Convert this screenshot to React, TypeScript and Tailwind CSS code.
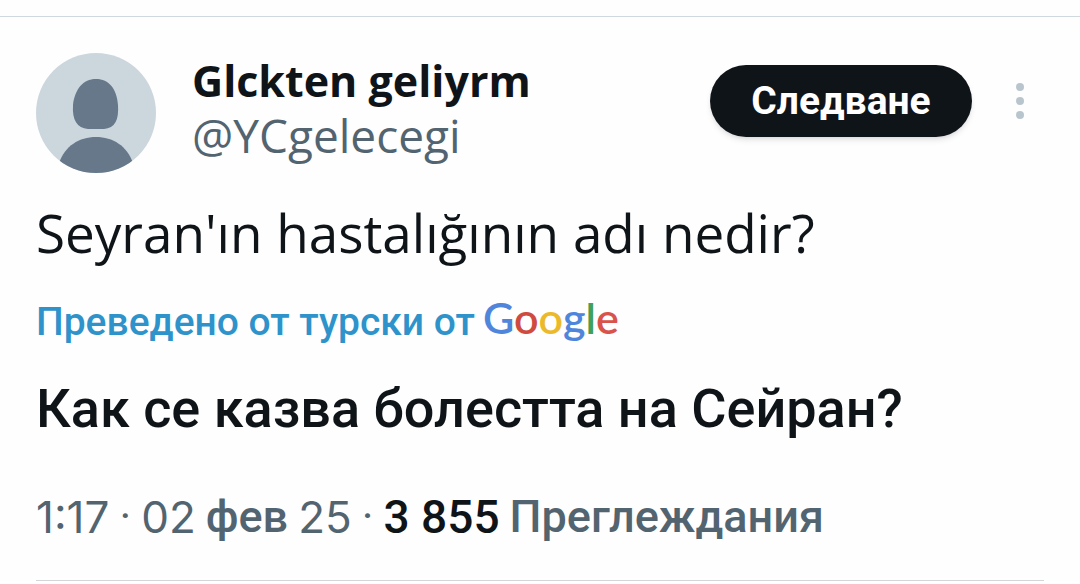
const googleLetters = [
  { char: 'G', color: 'text-[#4f86dc]' },
  { char: 'o', color: 'text-[#cf4b40]' },
  { char: 'o', color: 'text-[#ecb92b]' },
  { char: 'g', color: 'text-[#4f86dc]' },
  { char: 'l', color: 'text-[#3fa15a]' },
  { char: 'e', color: 'text-[#d9534a]' },
];

function Avatar() {
  return (
    <svg viewBox="0 0 120 120" className="size-[120px] shrink-0 rounded-full" role="img" aria-label="Glckten geliyrm">
      <rect width="120" height="120" fill="#ccd6dd" />
      <path d="M60 26C73 26 81 36 82 52C83 67 79 75 68 76H52C41 75 36 67 37 52C39 36 47 26 60 26Z" fill="#66788a" />
      <path d="M23 110C29 93 43 84 60 84C77 84 91 93 97 110V120H23Z" fill="#66788a" />
    </svg>
  );
}

function GoogleLogo() {
  return (
    <span className="font-['Lato',sans-serif] text-[43px] leading-[58px] font-semibold">
      {googleLetters.map((l, i) => (
        <span key={i} className={l.color}>{l.char}</span>
      ))}
    </span>
  );
}

export default function App() {
  return (
    <main className="bg-[#fefefe] pt-4 text-[#0f1419]">
      <article className="border-t border-[#cfd9de] px-9 pt-9">
        <header className="flex items-start">
          <Avatar />
          <div className="ml-9 min-w-0 flex-1 font-['Open_Sans',sans-serif] leading-[54px]">
            <h1 className="pt-px text-[43px] font-bold">Glckten geliyrm</h1>
            <p className="text-[46px] text-[#536471]">@YCgelecegi</p>
          </div>
          <button className="mt-3 h-[72px] w-[262px] rounded-full bg-[#0f1419] font-['Roboto',sans-serif] text-[39px] font-bold text-white shadow-md">
            Следване
          </button>
          <button aria-label="Още" className="mt-3 mr-3 ml-9 flex h-[72px] w-6 items-center justify-center">
            <svg viewBox="0 0 8 36" className="h-9 w-2" fill="#b9c5cd">
              <circle cx="4" cy="4" r="4" />
              <circle cx="4" cy="18" r="4" />
              <circle cx="4" cy="32" r="4" />
            </svg>
          </button>
        </header>

        <p className="mt-6 font-['Open_Sans',sans-serif] text-[53px] leading-[72px]">Seyran'ın hastalığının adı nedir?</p>

        <div className="mt-5 flex flex-wrap items-start gap-x-2 font-['Roboto',sans-serif] text-[39px] leading-[66px] font-medium text-[#2f93cb]">
          <a href="#">Преведено от турски от</a>
          <GoogleLogo />
        </div>

        <p className="mt-5 font-['Roboto',sans-serif] text-[54px] leading-[68px] font-medium">Как се казва болестта на Сейран?</p>

        <div className="flex flex-wrap items-center gap-x-[10px] border-b border-[#d3d5d6] pt-11 pb-[33px] font-['Roboto',sans-serif] text-[45px] leading-[60px] text-[#536471]">
          <span className="font-['Inter',sans-serif] text-[44px]">1:17</span>
          <span>·</span>
          <span className="font-['Inter',sans-serif] text-[44px]">02</span>
          <span className="font-medium">фев</span>
          <span className="font-['Inter',sans-serif] text-[44px]">25</span>
          <span>·</span>
          <span className="text-[46px] font-medium text-[#0f1419]">3 855</span>
          <span className="font-medium">Преглеждания</span>
        </div>
      </article>
    </main>
  );
}
